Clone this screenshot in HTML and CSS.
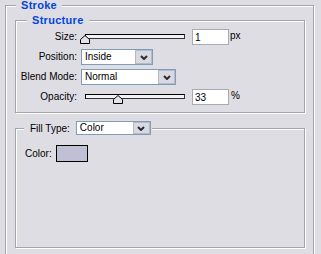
FILE: index.html
```html
<!DOCTYPE html>
<html lang="en">
<head>
  <meta charset="UTF-8" />
  <title>Stroke</title>
  <link rel="stylesheet" href="styles.css">
</head>
<body>
  <fieldset class="group outer">
    <legend class="title title-stroke">Stroke</legend>

    <fieldset class="group structure">
      <legend class="title title-structure">Structure</legend>
      <div class="form-grid">
        <label class="field-label">Size:</label>
        <div class="field">
          <div class="slider">
            <div class="slider-track"></div>
            <svg class="slider-thumb" style="left:calc(0% - 5px)" width="10" height="9" viewBox="0 0 10 9">
              <polygon points="0.5,8.5 0.5,4.5 5,0.5 9.5,4.5 9.5,8.5" fill="#e4e4e8" stroke="#000" stroke-width="1"/>
            </svg>
          </div>
          <input class="num" type="text" value="1">
          <span class="unit">px</span>
        </div>

        <label class="field-label">Position:</label>
        <div class="field">
          <div class="combo combo-position">
            <span class="combo-text">Inside</span>
            <span class="combo-btn">
              <svg width="8" height="5" viewBox="0 0 8 5"><polyline points="1,1 4,4 7,1" fill="none" stroke="#2b2b33" stroke-width="2"/></svg>
            </span>
          </div>
        </div>

        <label class="field-label">Blend Mode:</label>
        <div class="field">
          <div class="combo combo-blend">
            <span class="combo-text">Normal</span>
            <span class="combo-btn">
              <svg width="8" height="5" viewBox="0 0 8 5"><polyline points="1,1 4,4 7,1" fill="none" stroke="#2b2b33" stroke-width="2"/></svg>
            </span>
          </div>
        </div>

        <label class="field-label">Opacity:</label>
        <div class="field">
          <div class="slider">
            <div class="slider-track"></div>
            <svg class="slider-thumb" style="left:calc(33% - 5px)" width="10" height="9" viewBox="0 0 10 9">
              <polygon points="0.5,8.5 0.5,4.5 5,0.5 9.5,4.5 9.5,8.5" fill="#e4e4e8" stroke="#000" stroke-width="1"/>
            </svg>
          </div>
          <input class="num" type="text" value="33">
          <span class="unit unit-pct">%</span>
        </div>
      </div>
    </fieldset>

    <fieldset class="group fill">
      <legend class="fill-legend">
        <span class="fill-label">Fill Type:</span>
        <div class="combo combo-fill">
          <span class="combo-text">Color</span>
          <span class="combo-btn">
            <svg width="8" height="5" viewBox="0 0 8 5"><polyline points="1,1 4,4 7,1" fill="none" stroke="#2b2b33" stroke-width="2"/></svg>
          </span>
        </div>
      </legend>
      <div class="color-row">
        <span>Color:</span>
        <span class="swatch"></span>
      </div>
    </fieldset>
  </fieldset>
</body>
</html>
```

FILE: styles.css
```css
html, body {
  margin: 0;
  padding: 0;
  overflow: hidden;
}
body {
  background: #dedde3;
  font-family: "Liberation Sans", Arial, sans-serif;
  font-size: 10px;
  color: #000;
}

/* etched group boxes */
.group {
  box-sizing: border-box;
  margin: 0;
  border: 1px solid #a3a3a9;
  box-shadow: 1px 1px 0 #fff, inset 1px 1px 0 #fff;
  min-width: 0;
}
.title {
  font-weight: bold;
  font-size: 11px;
  line-height: 11px;
  color: #0046dc;
  padding: 0 5px;
  background: #dedde3;
  letter-spacing: 0.3px;
}

.outer {
  width: 309px;
  margin-left: 5px;
  padding: 4px 8px 12px 9px;
}
.title-stroke {
  margin-left: 1px;
}

.structure {
  width: 290px;
  padding: 3px 0 7px 0;
}
.title-structure {
  margin-left: 11px;
}

.form-grid {
  display: grid;
  grid-template-columns: 61px auto;
  grid-auto-rows: 16px;
  column-gap: 4px;
  row-gap: 4px;
}
.field-label {
  text-align: right;
  line-height: 16px;
  white-space: nowrap;
}
.field {
  display: flex;
  align-items: flex-start;
}

/* slider */
.slider {
  position: relative;
  width: 100px;
  height: 16px;
  margin-left: 4px;
}
.slider-track {
  box-sizing: border-box;
  height: 5px;
  margin-top: 5px;
  border: 1px solid #000;
  border-right-color: #333;
  border-bottom-color: #333;
  background: #f2f2f4;
}
.slider-thumb {
  position: absolute;
  top: 6px;
  display: block;
}

.num {
  box-sizing: border-box;
  width: 37px;
  height: 16px;
  margin: 0 0 0 7px;
  padding: 0 2px;
  border: 1px solid #a5acb2;
  background: #fff;
  font: inherit;
  color: #000;
  outline: none;
}
.unit {
  margin-left: 1px;
  line-height: 14px;
}
.unit-pct {
  margin-left: 2px;
}

/* combo boxes */
.combo {
  box-sizing: border-box;
  display: flex;
  height: 16px;
  border: 1px solid #7f9db9;
  background: #fff;
}
.combo-text {
  flex: 1;
  padding-left: 3px;
  line-height: 14px;
}
.combo-btn {
  box-sizing: border-box;
  width: 17px;
  height: 14px;
  display: flex;
  align-items: center;
  justify-content: center;
  border: 1px solid #b5b9c8;
  background: #d9d9e2;
}
.combo-btn svg {
  display: block;
}
.combo-position {
  width: 72px;
}
.combo-blend {
  width: 95px;
}

/* fill type */
.fill {
  width: 290px;
  margin-top: 8px;
  padding: 10px 0 85px 0;
}
.fill-legend {
  display: flex;
  align-items: center;
  margin-left: 8px;
  padding: 0 1px 0 6px;
  background: #dedde3;
  font-weight: normal;
}
.fill-label {
  margin-right: 6px;
}
.combo-fill {
  width: 75px;
  height: 14px;
}
.combo-fill .combo-text {
  line-height: 12px;
}
.combo-fill .combo-btn {
  height: 12px;
}

.color-row {
  display: flex;
  align-items: center;
  gap: 4px;
  height: 17px;
  padding-left: 9px;
}
.swatch {
  box-sizing: border-box;
  width: 32px;
  height: 17px;
  border: 1px solid #000;
  background: #bfc0d4;
}
```
